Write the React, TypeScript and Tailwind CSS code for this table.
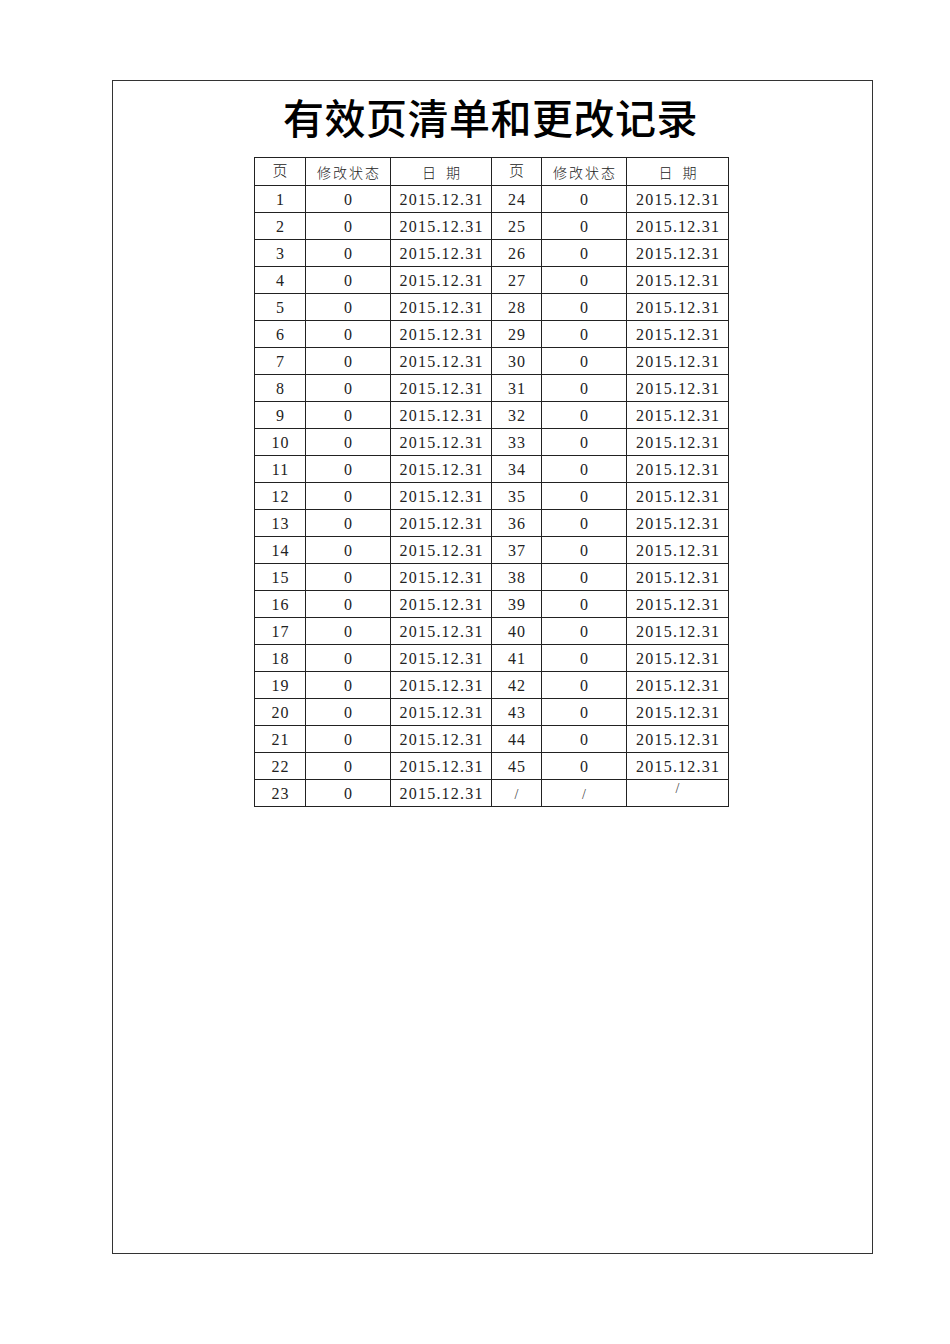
import React from "react";

const cjk = { fontFamily: '"Noto Sans CJK SC", "Noto Sans CJK JP", sans-serif' };
const num = { fontFamily: '"Liberation Serif", "Noto Sans CJK SC", serif' };

const DATE = "2015.12.31";

type Row = { left: number; right: number | null };

const rows: Row[] = Array.from({ length: 23 }, (_, i) => ({
  left: i + 1,
  right: i < 22 ? i + 24 : null,
}));

const cell = "border border-[#222] p-0 text-center align-middle";

const PageNoHeader = () => (
  <th className={`${cell} font-normal`}>
    <div className="h-[27px] overflow-hidden">
      <div
        className="mx-auto w-[15px] break-all pt-[1px] text-[15px] leading-[21px] font-light text-[#222]"
        style={cjk}
      >
        页码
      </div>
    </div>
  </th>
);

const HeaderCell = ({ label, wide }: { label: string; wide?: boolean }) => (
  <th className={`${cell} font-light`}>
    <span
      className={`text-[14px] text-[#222] ${wide ? "tracking-[10px] pl-[10px]" : "tracking-[2px] pl-[2px]"}`}
      style={cjk}
    >
      {label}
    </span>
  </th>
);

const Num = ({ children }: { children: React.ReactNode }) => (
  <span className="text-[16px] tracking-[1.2px] pl-[1.2px] text-[#222]" style={num}>
    {children}
  </span>
);

export default function App() {
  return (
    <div className="w-[950px] h-[1344px] bg-white pt-[80px]">
      <div className="ml-[112px] w-[761px] h-[1174px] border border-[#333]">
        <h1
          className="pt-[13px] pr-[4px] text-center text-[41px] leading-[44px] font-medium text-black tracking-[0.5px]"
          style={cjk}
        >
          有效页清单和更改记录
        </h1>
        <table className="ml-[141px] mt-[19px] border-collapse table-fixed w-[474px]">
          <colgroup>
            <col className="w-[51px]" />
            <col className="w-[85px]" />
            <col className="w-[101px]" />
            <col className="w-[50px]" />
            <col className="w-[85px]" />
            <col className="w-[102px]" />
          </colgroup>
          <thead>
            <tr className="h-[28px]">
              <PageNoHeader />
              <HeaderCell label="修改状态" />
              <HeaderCell label="日期" wide />
              <PageNoHeader />
              <HeaderCell label="修改状态" />
              <HeaderCell label="日期" wide />
            </tr>
          </thead>
          <tbody>
            {rows.map((r) => (
              <tr key={r.left} className="h-[27px]">
                <td className={cell}>
                  <Num>{r.left}</Num>
                </td>
                <td className={cell}>
                  <Num>0</Num>
                </td>
                <td className={cell}>
                  <Num>{DATE}</Num>
                </td>
                {r.right !== null ? (
                  <>
                    <td className={cell}>
                      <Num>{r.right}</Num>
                    </td>
                    <td className={cell}>
                      <Num>0</Num>
                    </td>
                    <td className={cell}>
                      <Num>{DATE}</Num>
                    </td>
                  </>
                ) : (
                  <>
                    <td className={cell}>
                      <span className="text-[14px] text-[#444]" style={num}>/</span>
                    </td>
                    <td className={cell}>
                      <span className="text-[14px] text-[#444]" style={num}>/</span>
                    </td>
                    <td className="border border-[#222] p-0 text-center align-top">
                      <span className="block pt-[1px] text-[14px] leading-[16px] text-[#444]" style={num}>/</span>
                    </td>
                  </>
                )}
              </tr>
            ))}
          </tbody>
        </table>
      </div>
    </div>
  );
}
